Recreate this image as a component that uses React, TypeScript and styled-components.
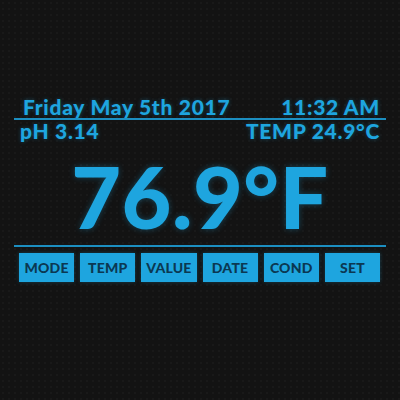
import * as React from 'react';
import styled, { createGlobalStyle } from 'styled-components';

const GlobalStyle = createGlobalStyle`
  html, body {
    margin: 0;
    padding: 0;
    background: #131313;
  }
`;

const accent = '#1ea5df';

const Screen = styled.div`
  width: 400px;
  height: 400px;
  box-sizing: border-box;
  padding: 96px 14px 0 14px;
  background-color: #131313;
  background-image: radial-gradient(rgba(255, 255, 255, 0.025) 1px, transparent 1px);
  background-size: 6px 6px;
  font-family: Lato, "Open Sans", sans-serif;
  font-weight: 900;
  color: ${accent};
  display: flex;
  flex-direction: column;
`;

const InfoRow = styled.div<{ $left: number; $right: number }>`
  display: flex;
  justify-content: space-between;
  align-items: baseline;
  padding: 0 ${p => p.$right}px 0 ${p => p.$left}px;
  font-size: 21px;
  line-height: 22px;
  letter-spacing: 0.7px;
  text-shadow: 0 0 4px rgba(30, 165, 223, 0.35);
`;

const Divider = styled.div`
  height: 2px;
  background: ${accent};
  opacity: 0.85;
`;

const BigReading = styled.div`
  font-size: 86px;
  line-height: 92px;
  text-align: center;
  letter-spacing: 0.5px;
  margin: 8px 0 3px;
  text-shadow: 0 0 6px rgba(30, 165, 223, 0.35);
`;

const ButtonBar = styled.div`
  display: grid;
  grid-template-columns: repeat(6, 1fr);
  gap: 6px;
  padding: 0 6px 0 5px;
  margin-top: 6px;
`;

const SoftKey = styled.div`
  height: 29px;
  background: ${accent};
  color: #0b3852;
  font-size: 14px;
  letter-spacing: 0.2px;
  display: flex;
  align-items: center;
  justify-content: center;
  box-shadow: 0 0 4px rgba(30, 165, 223, 0.3);
`;

const keys = ['MODE', 'TEMP', 'VALUE', 'DATE', 'COND', 'SET'];

const App: React.FC = () => (
  <>
    <GlobalStyle />
    <Screen>
      <InfoRow $left={9} $right={6}>
        <span>Friday May 5th 2017</span>
        <span>11:32 AM</span>
      </InfoRow>
      <Divider />
      <InfoRow $left={6} $right={6}>
        <span>pH 3.14</span>
        <span>TEMP 24.9°C</span>
      </InfoRow>
      <BigReading>76.9°F</BigReading>
      <Divider />
      <ButtonBar>
        {keys.map(k => (
          <SoftKey key={k}>{k}</SoftKey>
        ))}
      </ButtonBar>
    </Screen>
  </>
);

export default App;
